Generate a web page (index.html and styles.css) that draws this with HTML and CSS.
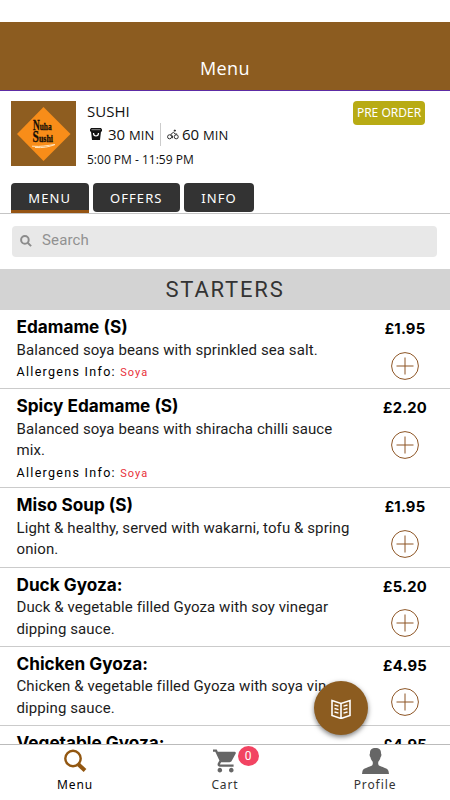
FILE: index.html
```html
<!DOCTYPE html>
<html lang="en">
<head>
<meta charset="utf-8">
<title>Menu</title>
<link rel="stylesheet" href="styles.css">
</head>
<body>
<svg class="defs" width="0" height="0"><defs>
<symbol id="plus" viewBox="0 0 28 28"><circle cx="14" cy="14" r="13.4"/><path d="M5.500 14h17M14 5.500v17"/></symbol>
</defs></svg>
<div class="app">
<header class="topbar"><h1>Menu</h1></header>
<section class="shop">
  <svg class="logo" viewBox="0 0 65 65"><rect width="65" height="65" fill="#8e5d20"/><path d="M32.500 6 59.500 33 32.500 60 6 33z" fill="#f88d19"/>
  <g class="logo-text"><text transform="translate(22 28.500) scale(.67 1)"><tspan font-size="14">N</tspan><tspan font-size="11">uha</tspan></text><text transform="translate(21.500 40.500) scale(.72 1)"><tspan font-size="16">S</tspan><tspan font-size="11">ushi</tspan></text></g>
  <path d="M21 45.200C30 46 36 44.500 44 43.500 38 46 32 47 24 46.500" fill="none" stroke="#ffe4bd" stroke-width="1"/></svg>
  <div class="facts">
    <div class="kind">SUSHI</div>
    <div class="times">
      <svg class="bag" viewBox="0 0 12 12"><path d="M1 0h10l1 1.500V3.500H0V1.500zM1 3.600h10l-1 8.400H2z" fill="#111"/><path d="M1.500 1.700h9" stroke="#aaa" stroke-width=".8"/><path d="M3.500 5c0 4 5 4 5 0" fill="none" stroke="#fff" stroke-width="1.200"/></svg>
      <span class="pick">30 <small>MIN</small></span><i class="sep"></i>
      <svg class="bike" viewBox="0 0 13 11" fill="none" stroke="#222" stroke-width="1"><circle cx="2.800" cy="8" r="2.200"/><circle cx="10" cy="8" r="2.200"/><path d="M6 9.500V7L4 5.500 7 3l1.800 2H11"/><circle cx="8.500" cy="1.300" r=".7" fill="#222"/></svg>
      <span class="ride">60 <small>MIN</small></span>
    </div>
    <div class="hours">5:00 PM - 11:59 PM</div>
  </div>
  <div class="pre">PRE ORDER</div>
</section>
<nav class="tabs"><a class="tab on">MENU</a><a class="tab offers">OFFERS</a><a class="tab info">INFO</a></nav>
<div class="search"><svg viewBox="0 0 12 12" fill="none" stroke="#8c8c8c" stroke-width="2"><circle cx="4.900" cy="4.900" r="3.800"/><path d="M7.700 7.700l3.400 3.400"/></svg><span>Search</span></div>
<h2 class="section">STARTERS</h2>
<main class="items">
  <article class="item"><div class="txt"><h3>Edamame (S)</h3><p>Balanced soya beans with sprinkled sea salt.</p><div class="allergy">Allergens Info: <em>Soya</em></div></div><div class="buy"><b>£1.95</b><svg class="add"><use href="#plus"/></svg></div></article>
  <article class="item tall"><div class="txt"><h3>Spicy Edamame (S)</h3><p>Balanced soya beans with shiracha chilli sauce<br>mix.</p><div class="allergy">Allergens Info: <em>Soya</em></div></div><div class="buy"><b>£2.20</b><svg class="add"><use href="#plus"/></svg></div></article>
  <article class="item"><div class="txt"><h3>Miso Soup (S)</h3><p>Light &amp; healthy, served with wakarni, tofu &amp; spring<br>onion.</p></div><div class="buy"><b>£1.95</b><svg class="add"><use href="#plus"/></svg></div></article>
  <article class="item"><div class="txt"><h3>Duck Gyoza:</h3><p>Duck &amp; vegetable filled Gyoza with soy vinegar<br>dipping sauce.</p></div><div class="buy"><b>£5.20</b><svg class="add"><use href="#plus"/></svg></div></article>
  <article class="item"><div class="txt"><h3>Chicken Gyoza:</h3><p>Chicken &amp; vegetable filled Gyoza with soya vin<br>dipping sauce.</p></div><div class="buy"><b>£4.95</b><svg class="add"><use href="#plus"/></svg></div></article>
  <article class="item"><div class="txt"><h3>Vegetable Gyoza:</h3></div><div class="buy"><b>£4.95</b></div></article>
</main>
<div class="fab"><svg viewBox="0 0 20 20" fill="none" stroke="#fff" stroke-width="1.600"><path d="M1 1.500l9 3 9-3v15l-9 3-9-3zM10 4.500v15"/><path d="M3.500 6l4 1.200M3.500 9.500l4 1.200M3.500 13l4 1.200M16.500 6l-4 1.200M16.500 9.500l-4 1.200M16.500 13l-4 1.200" stroke-width="1.400"/></svg></div>
<footer class="nav">
  <a><svg viewBox="0 0 24 24" fill="none" stroke="#925711"><circle cx="10" cy="9.500" r="7.700" stroke-width="2.400"/><path d="M15.500 15.500l6.500 6" stroke-width="4"/></svg><span class="current">Menu</span></a>
  <a><svg class="cart" viewBox="1 2 21 20" fill="#666"><path d="M7 18c-1.100 0-1.990.9-1.990 2S5.900 22 7 22s2-.9 2-2-.9-2-2-2zM1 2v2h2l3.600 7.590-1.350 2.450c-.16.28-.25.61-.25.960 0 1.100.9 2 2 2h12v-2H7.420c-.14 0-.25-.11-.25-.25l.03-.12.9-1.630h7.450c.75 0 1.410-.41 1.750-1.030l3.580-6.490A1 1 0 0 0 20 4H5.210l-.94-2H1zm16 16c-1.100 0-1.990.9-1.990 2s.89 2 1.990 2 2-.9 2-2-.9-2-2-2z"/></svg><span>Cart</span><i class="badge">0</i></a>
  <a><svg class="person" viewBox="0 0 27 26" fill="#666"><path d="M13.500 0C9.500 0 7.800 2 8 5.500c-.8.500-.3 3 .4 3.600.4 2.400 1.300 3.600 2.300 4.700.3 2 .1 3.400-1.200 4C5 20 .8 20.300.4 23.500L0 26h27l-.4-2.500c-.4-3.200-4.600-3.500-9.100-5.700-1.300-.6-1.500-2-1.200-4 1-1.100 1.900-2.300 2.300-4.700.7-.6 1.200-3.100.4-3.600C19.200 2 17.500 0 13.500 0z"/></svg><span>Profile</span></a>
</footer>
</div>
</body>
</html>
```
FILE: styles.css
```css
* { box-sizing: border-box; margin: 0; padding: 0; }
body { background: #fff; color: #000; font-family: Roboto, sans-serif; overflow: hidden; }
.defs { position: absolute; }
.app { position: relative; width: 450px; height: 800px; display: flex; flex-direction: column; overflow: hidden; padding-top: 22px; }
.topbar { flex: none; height: 69px; background: #8c5c20; border-bottom: 1px solid #5d2ca5; padding-top: 33px; text-align: center; }
h1 { font: 400 18px/27px "Open Sans", "Noto Sans", sans-serif; color: #fff; letter-spacing: .4px; }
.shop { flex: none; height: 91px; display: flex; padding: 10px 25px 0 11px; }
.logo { width: 65px; height: 65px; }
.logo-text { font-family: "Liberation Serif", serif; font-weight: bold; fill: #150d05; stroke: #150d05; stroke-width: .3px; }
.facts { margin-left: 11px; flex: 1; font-family: "Open Sans", "Noto Sans", sans-serif; color: #111; }
.kind { font-size: 15px; line-height: 22px; letter-spacing: 0; margin-top: -1px; }
.times { display: flex; align-items: center; height: 23px; font-size: 15px; margin-top: 1px; }
.times small { font-size: 13px; }
.times span { margin-top: -2px; }
.bag { width: 12px; height: 12px; margin-left: 3px; margin-top: -1px; }
.pick { margin-left: 6px; width: 50px; white-space: nowrap; }
.sep { width: 1px; height: 23px; background: #ccc; margin: 0 6px 0 2px; }
.bike { width: 12px; height: 11px; margin-right: 3px; }
.hours { font-size: 12px; line-height: 17px; margin-top: 5px; letter-spacing: 0; }
.pre { width: 72px; height: 24px; border-radius: 4px; background: #b8ab14; color: #fff; font: 12px/24px "Noto Sans", sans-serif; text-align: center; white-space: nowrap; }
.tabs { flex: none; display: flex; gap: 4px; height: 32px; border-bottom: 1px solid #c5c5c5; padding-left: 11px; }
.tab { height: 29.500px; margin-top: .500px; border-radius: 4px; background: #333; color: #fff; font: 400 13px/30px "Noto Sans", sans-serif; letter-spacing: 1.1px; text-align: center; width: 77.500px; }
.tab.on { height: 30.500px; border-bottom: 3px solid #955413; border-radius: 4px 4px 0 0; }
.tab.offers { width: 87.500px; }
.tab.info { width: 70px; }
.search { flex: none; margin: 12px 13px 12px 12px; height: 31px; border-radius: 4px; background: #e8e8e8; display: flex; align-items: center; padding-left: 8px; color: #919191; font-size: 15px; letter-spacing: .15px; }
.search svg { width: 12px; height: 12px; margin-right: 10px; margin-top: -1px; }
.search span { margin-top: -4px; }
.section { flex: none; height: 41px; background: #d3d3d3; text-align: center; font: 400 22px/42px Roboto, sans-serif; letter-spacing: 1.8px; color: #333; }
.items { flex: 1; min-height: 0; overflow: hidden; }
.item { height: 79.250px; border-bottom: 1px solid #cbcbcb; display: flex; padding: 5px 23px 0 16.500px; }
.tall { height: 99px; }
.txt { flex: 1; white-space: nowrap; }
h3 { font: 700 17.200px/24px Inter, sans-serif; letter-spacing: 0; }
p { font-size: 15px; line-height: 21.500px; letter-spacing: .09px; color: #1c1c1c; padding-top: .600px; }
.allergy { font-size: 12.500px; line-height: 22px; letter-spacing: 1.3px; color: #000; }
.allergy em { font-size: 11px; font-style: normal; color: #e8303a; letter-spacing: 1px; }
.buy { width: 44px; display: flex; flex-direction: column; align-items: center; }
.buy b { font: 700 14.800px/24px Inter, sans-serif; margin-top: 2px; letter-spacing: .2px; white-space: nowrap; }
.add { width: 28px; height: 28px; margin-top: 10.500px; fill: none; stroke: #8d5525; stroke-width: 1; }
.nav { flex: none; height: 56px; border-top: 1px solid #bbb; background: #fff; display: grid; grid-template-columns: repeat(3, 1fr); }
.nav a { position: relative; display: flex; flex-direction: column; align-items: center; padding-top: 4px; }
.nav svg { width: 24px; height: 24px; }
.nav .person { width: 27px; height: 26px; margin-top: -1px; margin-bottom: -1px; }
.nav span { font: 12px/16px "Noto Sans", sans-serif; letter-spacing: .9px; color: #333; margin-top: 4px; }
.nav .current { color: #000; }
.badge { position: absolute; left: 87.500px; top: 1px; width: 21px; height: 20px; border-radius: 50%; background: #f24462; color: #fff; font: 12px/20px Roboto, sans-serif; text-align: center; }
.fab { position: absolute; left: 314px; top: 680.500px; width: 54px; height: 54px; border-radius: 50%; background: #8c5c20; box-shadow: 0 2px 5px rgba(0,0,0,.5); display: grid; place-items: center; }
.fab svg { width: 20px; height: 20px; margin-top: 2px; }
```
